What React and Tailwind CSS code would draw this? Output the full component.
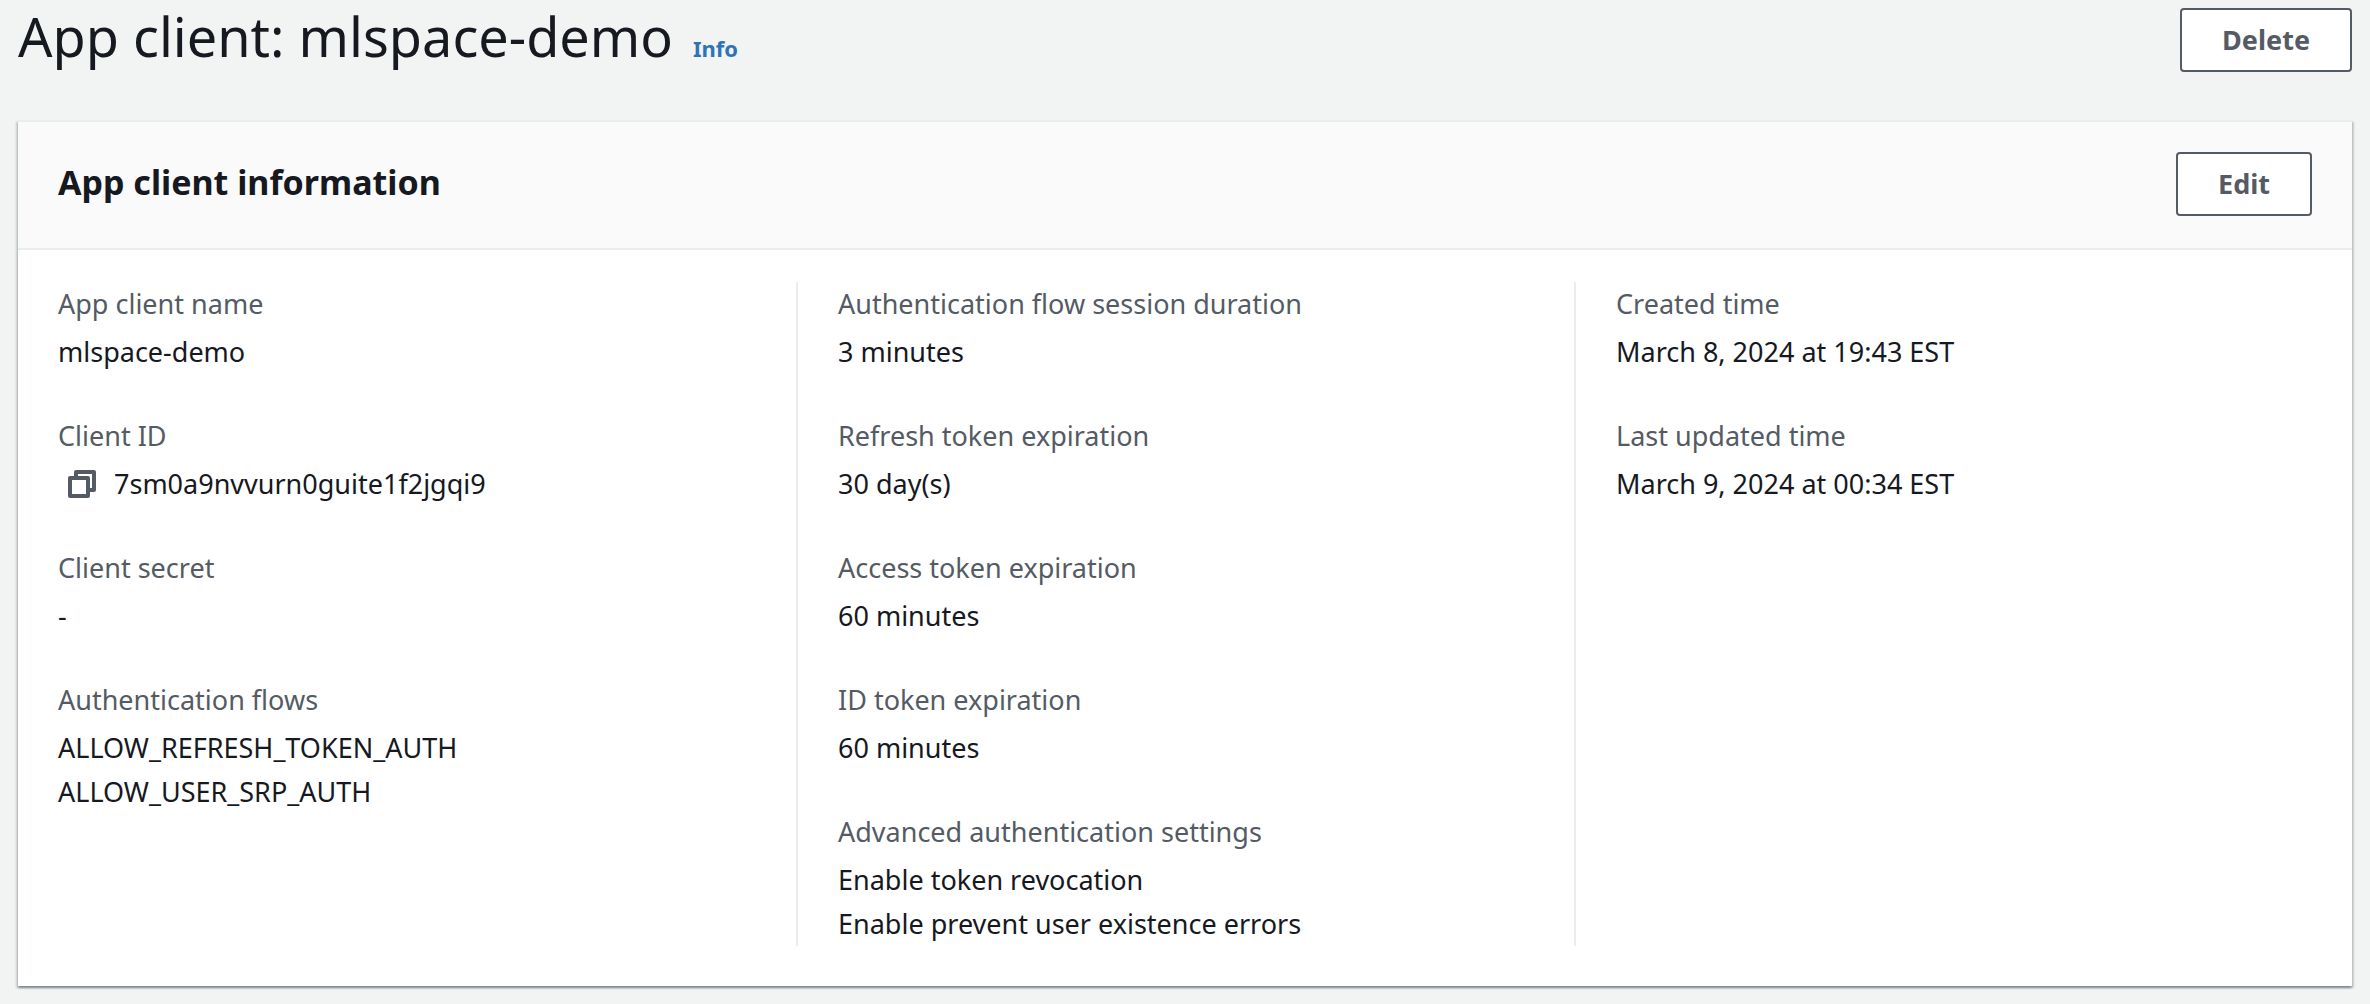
const columns = [
  [
    { label: "App client name", values: ["mlspace-demo"] },
    { label: "Client ID", values: ["7sm0a9nvvurn0guite1f2jgqi9"], copyable: true },
    { label: "Client secret", values: ["-"] },
    { label: "Authentication flows", values: ["ALLOW_REFRESH_TOKEN_AUTH", "ALLOW_USER_SRP_AUTH"] },
  ],
  [
    { label: "Authentication flow session duration", values: ["3 minutes"] },
    { label: "Refresh token expiration", values: ["30 day(s)"] },
    { label: "Access token expiration", values: ["60 minutes"] },
    { label: "ID token expiration", values: ["60 minutes"] },
    {
      label: "Advanced authentication settings",
      values: ["Enable token revocation", "Enable prevent user existence errors"],
    },
  ],
  [
    { label: "Created time", values: ["March 8, 2024 at 19:43 EST"] },
    { label: "Last updated time", values: ["March 9, 2024 at 00:34 EST"] },
  ],
];

function Button({ children }) {
  return (
    <button
      type="button"
      className="h-16 shrink-0 cursor-pointer rounded-[4px] border-2 border-[#545b64] bg-white px-10 text-[27px] leading-[44px] font-bold text-[#545b64] hover:bg-[#fafafa]"
    >
      {children}
    </button>
  );
}

function CopyIcon() {
  return (
    <svg width="32" height="32" viewBox="0 0 16 16" fill="none" stroke="currentColor" strokeWidth="2" strokeLinejoin="round" aria-hidden="true">
      <path d="M2 5h9v9H2z" />
      <path d="M5 5V2h9v9h-3" />
    </svg>
  );
}

function Field({ label, values, copyable }) {
  return (
    <div>
      <dt className="mb-1 text-[#545b64]">{label}</dt>
      {values.map((value) => (
        <dd key={value} className="flex items-center">
          {copyable && (
            <button
              type="button"
              aria-label="Copy client ID"
              className="mr-4 ml-2 flex cursor-pointer items-center text-[#545b64]"
            >
              <CopyIcon />
            </button>
          )}
          <span>{value}</span>
        </dd>
      ))}
    </div>
  );
}

export default function App() {
  return (
    <main className="min-h-screen bg-[#f2f3f3] px-[18px] pt-2 pb-4 font-['Noto_Sans',sans-serif] text-[27px] leading-[44px] text-[#16191f]">
      <header className="flex items-start justify-between">
        <h1 className="flex items-baseline gap-5 text-[54px] leading-[56px] font-normal">
          App client: mlspace-demo
          <a href="#info" className="text-[22px] leading-none font-bold text-[#2e73b8] hover:underline">
            Info
          </a>
        </h1>
        <Button>Delete</Button>
      </header>

      <section
        aria-labelledby="client-information"
        className="mt-12 border-t-2 border-[#eaeded] bg-white shadow-[0_2px_2px_0_rgba(0,28,36,0.3),2px_2px_2px_0_rgba(0,28,36,0.15),-2px_2px_2px_0_rgba(0,28,36,0.15)]"
      >
        <div className="flex items-start justify-between border-b-2 border-[#eaeded] bg-[#fafafa] px-10 pt-[30px] pb-8">
          <h2 id="client-information" className="text-[34px] leading-[60px] font-bold">
            App client information
          </h2>
          <Button>Edit</Button>
        </div>

        <div className="grid grid-cols-3 pt-8 pb-10">
          {columns.map((fields, index) => (
            <dl
              key={index}
              className="flex flex-col gap-10 border-l-2 border-[#eaeded] px-10 first:border-l-0"
            >
              {fields.map((field) => (
                <Field key={field.label} {...field} />
              ))}
            </dl>
          ))}
        </div>
      </section>
    </main>
  );
}
